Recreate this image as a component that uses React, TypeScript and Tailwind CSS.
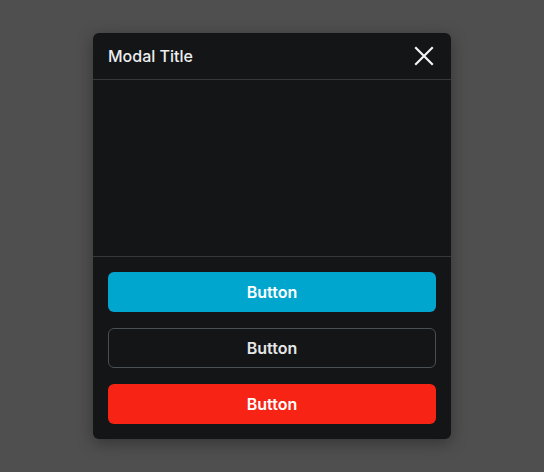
import React from "react";

export default function App() {
  return (
    <div className="w-[544px] h-[472px] bg-[#4f4f4f] flex items-center justify-center" style={{ fontFamily: "Inter, 'Noto Sans', sans-serif" }}>
      <div className="w-[358px] h-[406px] bg-[#141517] rounded-[6px] shadow-[0_4px_16px_rgba(0,0,0,0.35)] flex flex-col overflow-hidden">
        <div className="h-[46px] flex items-center justify-between pl-[15px] pr-[17px] border-b border-[#36383b] box-content">
          <span className="text-[16px] font-medium text-[#eceef0]">Modal Title</span>
          <svg width="20" height="20" viewBox="0 0 20 20" fill="none" stroke="#f2f3f4" strokeWidth="2.2" strokeLinecap="square">
            <path d="M2 2 L18 18 M18 2 L2 18" />
          </svg>
        </div>
        <div className="h-[176px] border-b border-[#36383b] box-content" />
        <div className="flex flex-col gap-4 px-[15px] pt-[15px] pb-[15px]">
          <button className="h-10 rounded-[6px] bg-[#00a6cd] text-white text-[16px] font-semibold">Button</button>
          <button className="h-10 rounded-[6px] border border-[#4b5054] text-[#e4e6e8] text-[16px] font-semibold">Button</button>
          <button className="h-10 rounded-[6px] bg-[#f72416] text-white text-[16px] font-semibold">Button</button>
        </div>
      </div>
    </div>
  );
}
